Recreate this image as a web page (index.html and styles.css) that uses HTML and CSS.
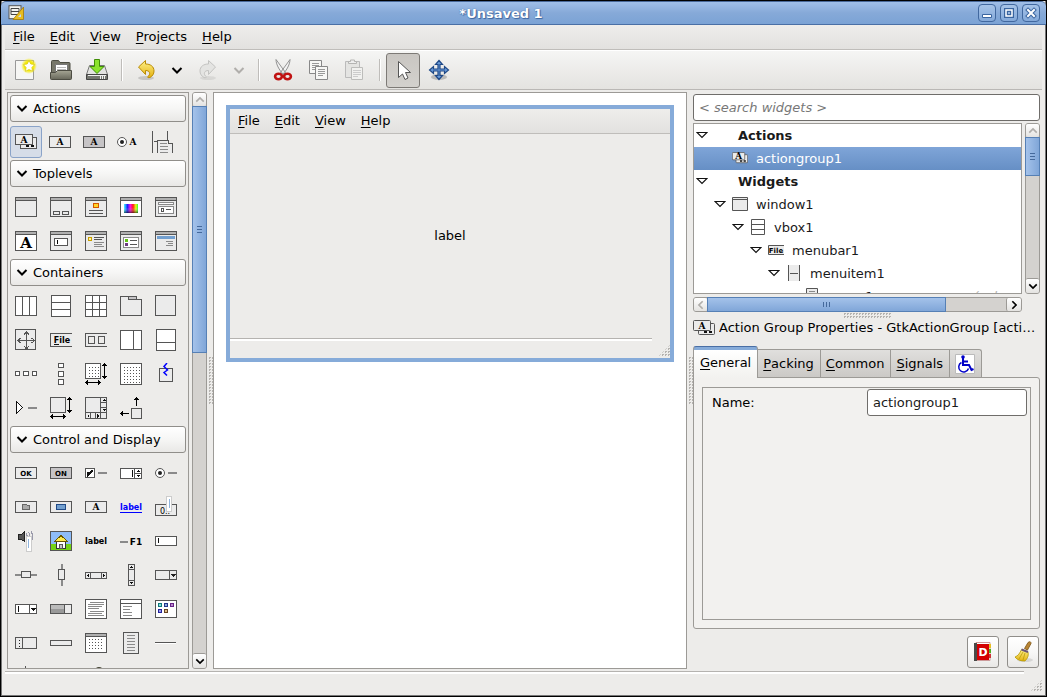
FILE: index.html
```
<!DOCTYPE html>
<html lang="en">

<head>
    <meta charset="UTF-8">
    <meta name="viewport" content="width=device-width, initial-scale=1.0">
    <title>*Unsaved 1</title>
    <link rel="stylesheet" href="styles.css">
</head>

<body>
    <!-- Shared icon parts -->
    <svg class="defs" width="0" height="0" aria-hidden="true">
        <defs>
            <linearGradient id="rainbow">
                <stop offset="0" stop-color="#40ffff" />
                <stop offset=".25" stop-color="#2020ff" />
                <stop offset=".45" stop-color="#ff10e0" />
                <stop offset=".65" stop-color="#ff2010" />
                <stop offset=".85" stop-color="#e8ff10" />
                <stop offset="1" stop-color="#30ff30" />
            </linearGradient>
            <linearGradient id="shade" x2="0" y2="1">
                <stop offset="0" stop-color="#fff" stop-opacity="0" />
                <stop offset=".4" stop-color="#fff" stop-opacity="0" />
                <stop offset="1" stop-color="#000" stop-opacity=".6" />
            </linearGradient>
            <linearGradient id="gold" x2="0" y2="1">
                <stop offset="0" stop-color="#fdf08a" />
                <stop offset="1" stop-color="#e5b210" />
            </linearGradient>
            <linearGradient id="folder" x2="0" y2="1">
                <stop offset="0" stop-color="#a5a594" />
                <stop offset="1" stop-color="#67675a" />
            </linearGradient>
            <radialGradient id="glow">
                <stop offset=".6" stop-color="#f4ea10" />
                <stop offset="1" stop-color="#f8ee20" stop-opacity="0" />
            </radialGradient>
            <pattern id="dots" width="3" height="3" patternUnits="userSpaceOnUse">
                <path fill="#555" d="M1 1h1v1h-1z" />
            </pattern>
        </defs>
        <symbol id="frame" viewBox="0 0 22 22">
            <rect class="ln" x=".5" y="1.5" width="21" height="19" rx="1" />
            <path fill="#b0b0b0" d="M1 2h20v2H1z" />
            <path class="ln" d="M1 4.500h20" />
        </symbol>
        <symbol id="group" viewBox="0 0 22 22">
            <rect class="ln" x="5.500" y="6.500" width="16" height="11" rx="1" />
            <path stroke="#111" stroke-width="2" d="M11 15h3M16 15h3" />
            <rect class="ln" x=".5" y="3.500" width="17" height="10" rx="1" />
        </symbol>
        <symbol id="vbox" viewBox="0 0 22 22">
            <path class="ln w" d="M1.500.5h19v21h-19zM1.500 7.500h19M1.500 14.500h19" />
        </symbol>
        <symbol id="down" viewBox="0 0 12 12">
            <path fill="none" stroke="currentColor" stroke-width="2" d="M1.500 4l4.500 4.500 4.500-4.500" />
        </symbol>
        <symbol id="tri" viewBox="0 0 12 12">
            <path fill="#fff" stroke="#111" stroke-width="1.200" d="M1 3.500h10l-5 5z" />
        </symbol>
    </svg>

    <div class="window">
        <header class="titlebar">
            <svg class="appicon" viewBox="0 0 16 16">
                <rect x="1" y=".7" width="12" height="13" fill="#f4f4f0" stroke="#555" />
                <path fill="none" stroke="#444" d="M3 3.500h8v6H3zM3 6.500h8" />
                <path fill="#e6bc20" stroke="#a77a05" stroke-width=".8" d="M15.500 2v12.500H5z" />
                <path fill="#c7d7f0" d="M13 9v3h-3z" />
            </svg>
            <h1>*Unsaved 1</h1>
            <div class="winbtns">
                <button aria-label="Minimize"><svg viewBox="0 0 16 16"><path fill="#fff" stroke="#3a65a0" d="M3.500 9.500h9v3h-9z" /></svg></button>
                <button aria-label="Maximize"><svg viewBox="0 0 16 16"><path fill="none" stroke="#3a65a0" stroke-width="4" d="M5 5h6v6H5z" /><path fill="none" stroke="#fff" stroke-width="1.500" d="M5 5h6v6H5z" /></svg></button>
                <button aria-label="Close"><svg viewBox="0 0 16 16"><path stroke="#3a65a0" stroke-width="4" stroke-linecap="square" d="M5 5l6 6M11 5l-6 6" /><path stroke="#fff" stroke-width="2" stroke-linecap="square" d="M5 5l6 6M11 5l-6 6" /></svg></button>
            </div>
        </header>

        <nav class="menubar">
            <button><u>F</u>ile</button>
            <button><u>E</u>dit</button>
            <button><u>V</u>iew</button>
            <button><u>P</u>rojects</button>
            <button><u>H</u>elp</button>
        </nav>

        <div class="toolbar">
            <button aria-label="New">
                <svg viewBox="0 0 24 24">
                    <path fill="#f6f6f4" stroke="#999" d="M2.500 2.500h18v19h-18z" />
                    <circle cx="16" cy="8" r="8" fill="url(#glow)" />
                    <path fill="#fff" stroke="#d8c800" stroke-width=".7" d="M16 2.500l1.800 3.500 3.900.6-2.800 2.800.6 3.900-3.500-1.800-3.500 1.800.6-3.900-2.800-2.800 3.900-.6z" />
                </svg>
            </button>
            <button aria-label="Open">
                <svg viewBox="0 0 24 24">
                    <path fill="#77776a" stroke="#4c4c42" d="M2.500 20V3.500q0-1 1-1h6l1.500 2h9q1 0 1 1V20z" />
                    <path fill="#fff" stroke="#777" d="M6.500 6.500h12v9h-12z" />
                    <path stroke="#bbb" d="M8 9.500h9M8 11.500h9" />
                    <path fill="url(#folder)" stroke="#4c4c42" d="M1.500 14.500h5l2-2h14v8q0 1-1 1h-19q-1 0-1-1z" />
                </svg>
            </button>
            <button aria-label="Save">
                <svg viewBox="0 0 24 24">
                    <path fill="#e3e3e1" stroke="#777" d="M4.500 7.500h15l3 9H1.500z" />
                    <path fill="#74766f" stroke="#444" d="M1.500 16.500h21v5h-21z" />
                    <path stroke="#eee" d="M3 17.500h18M15.500 18v3M17.500 18v3M19.500 18v3" />
                    <path fill="#8be32c" stroke="#3f8c05" d="M9.500 1.500h5v7h4.500l-7 7-7-7h4.500z" />
                </svg>
            </button>
            <span class="sep"></span>
            <button aria-label="Undo">
                <svg viewBox="0 0 24 24">
                    <ellipse cx="12" cy="20" rx="8" ry="2" fill="#000" opacity=".15" />
                    <path fill="url(#gold)" stroke="#b98b05" d="M11.500 2.500v3.500c5 0 8.500 2.500 8.500 7 0 3-1.500 5-4 6.500-2.500.5-3-.5-1.500-1.500 2-2 1.500-5.500-3-5.500v4l-7-7.500z" />
                </svg>
            </button>
            <button class="narrow" aria-label="Undo history"><svg viewBox="0 0 12 12"><use href="#down" /></svg></button>
            <button aria-label="Redo" disabled>
                <svg viewBox="0 0 24 24">
                    <ellipse cx="12" cy="20" rx="8" ry="2" fill="#000" opacity=".07" />
                    <path fill="#e4e4e2" stroke="#c3c3c1" d="M12.500 2.500v3.500c-5 0-8.500 2.500-8.500 7 0 3 1.500 5 4 6.500 2.500.5 3-.5 1.500-1.500-2-2-1.500-5.500 3-5.500v4l7-7.500z" />
                </svg>
            </button>
            <button class="narrow" aria-label="Redo history" disabled><svg viewBox="0 0 12 12"><use href="#down" /></svg></button>
            <span class="sep"></span>
            <button aria-label="Cut">
                <svg viewBox="0 0 24 24">
                    <path fill="#f2f2f2" stroke="#888" stroke-width=".9" d="M5 1.500l9.500 13-2 2C8 12 5 6 5 1.500zM19 1.500l-9.500 13 2 2C16 12 19 6 19 1.500z" />
                    <g fill="none" stroke="#c01212" stroke-width="2.600">
                        <ellipse cx="7.500" cy="18.500" rx="3.400" ry="2.700" />
                        <ellipse cx="16.500" cy="18.500" rx="3.400" ry="2.700" />
                    </g>
                </svg>
            </button>
            <button aria-label="Copy">
                <svg viewBox="0 0 24 24">
                    <path fill="#f7f7f5" stroke="#888" d="M2.500 2.500h12v13h-12z" />
                    <path stroke="#999" d="M5 5.500h7M5 7.500h7M5 9.500h7M5 11.500h5" />
                    <path fill="#f7f7f5" stroke="#888" d="M8.500 8.500h12v13h-12z" />
                    <path stroke="#999" d="M11 11.500h7M11 13.500h7M11 15.500h7M11 17.500h5" />
                </svg>
            </button>
            <button aria-label="Paste" disabled>
                <svg viewBox="0 0 24 24">
                    <path fill="#e4e4e2" stroke="#bbb" d="M2.500 3.500h14v16h-14z" />
                    <path fill="#eee" stroke="#b4b4b2" d="M5.500 5.500v-2h2v-1.500h4v1.500h2v2z" />
                    <path fill="#f1f1ef" stroke="#bcbcba" d="M8.500 9.500h11v12h-11z" />
                    <path stroke="#ccc" d="M10 12.500h8M10 14.500h8M10 16.500h8M10 18.500h5" />
                </svg>
            </button>
            <span class="sep"></span>
            <button class="pressed" aria-label="Selector" aria-pressed="true">
                <svg viewBox="0 0 24 24">
                    <path fill="#fff" stroke="#555" d="M7.500 3.500v16l4-3.500 2.500 5.500 3-1.500-2.500-5.500h5z" />
                </svg>
            </button>
            <button aria-label="Drag and resize">
                <svg viewBox="0 0 24 24">
                    <ellipse cx="12" cy="19" rx="8" ry="3" fill="#000" opacity=".2" />
                    <path fill="#6a9bd8" stroke="#1f4987" stroke-width="1.200" d="M12 2.500l3.500 4H13v4.500h4.500V8.500L21.500 12l-4 3.500V13H13v4.500h2.500L12 21.500l-3.500-4H11V13H6.500v2.500L2.500 12l4-3.500V11H11V6.500H8.500z" />
                </svg>
            </button>
        </div>

        <main class="main">
            <aside class="left">
                <div class="palette">
                    <section>
                        <button class="group" aria-expanded="true"><svg viewBox="0 0 12 12"><use href="#down" /></svg>Actions</button>
                        <div class="items tight">
                            <button class="selected" aria-label="Action Group"><svg viewBox="0 0 22 22"><use href="#group" /><text class="ta" x="9" y="12">A</text></svg></button>
                            <button aria-label="Action"><svg viewBox="0 0 22 22"><rect class="ln" x=".5" y="5.500" width="21" height="11" rx="1" /><text class="ta" x="11" y="14">A</text></svg></button>
                            <button aria-label="Toggle Action"><svg viewBox="0 0 22 22"><rect class="ln d" x=".5" y="5.500" width="21" height="11" rx="1" /><text class="ta" x="11" y="14">A</text></svg></button>
                            <button aria-label="Radio Action"><svg viewBox="0 0 22 22"><circle class="ln w" cx="5" cy="11" r="4.500" /><circle cx="5" cy="11" r="2" fill="#222" /><text class="ta" x="16" y="14">A</text></svg></button>
                            <button aria-label="Recent Action"><svg viewBox="0 0 22 22"><path class="k" d="M1.500 0v22M16.500 0v9M3 10.500h4" /><path class="ln" d="M6.500 22V9.500h11v3h4V22" /><path class="g" d="M9 12.500h7M9 15.500h8M9 18.500h8M9 21.500h8" /></svg></button>
                        </div>
                    </section>
                    <section>
                        <button class="group" aria-expanded="true"><svg viewBox="0 0 12 12"><use href="#down" /></svg>Toplevels</button>
                        <div class="items">
                            <button aria-label="Window"><svg viewBox="0 0 22 22"><use href="#frame" /></svg></button>
                            <button aria-label="Dialog"><svg viewBox="0 0 22 22"><use href="#frame" /><rect class="ln" x="3.500" y="15.500" width="6" height="3" rx="1" /><rect class="ln" x="12.500" y="15.500" width="6" height="3" rx="1" /></svg></button>
                            <button aria-label="About Dialog"><svg viewBox="0 0 22 22"><use href="#frame" /><rect x="8.500" y="7.500" width="5" height="4" rx="1" fill="#ffd42a" stroke="#d45500" /><path class="k" d="M4 14.500h14M4 17.500h14" /></svg></button>
                            <button aria-label="Color Selection Dialog"><svg viewBox="0 0 22 22"><use href="#frame" /><path fill="#fff" d="M1 5h20v15H1z" /><path fill="url(#rainbow)" d="M4 8h14v9H4z" /><path fill="url(#shade)" d="M4 8h14v9H4z" /></svg></button>
                            <button aria-label="File Chooser Dialog"><svg viewBox="0 0 22 22"><use href="#frame" /><rect class="ln w g" x="3.500" y="6.500" width="15" height="2" /><rect class="ln w g" x="3.500" y="10.500" width="15" height="7" /><path class="k" d="M6.500 12.500h2v3h-2zM11 13.500h5" /></svg></button>
                            <button aria-label="Font Selection Dialog"><svg viewBox="0 0 22 22"><use href="#frame" /><path fill="#fff" d="M1 5h20v15H1z" /><text class="serif" x="11" y="18">A</text></svg></button>
                            <button aria-label="Input Dialog"><svg viewBox="0 0 22 22"><use href="#frame" /><rect class="ln w" x="4.500" y="8.500" width="13" height="7" rx="1" /><path stroke="#000" d="M7.500 10v4" /></svg></button>
                            <button aria-label="Message Dialog"><svg viewBox="0 0 22 22"><use href="#frame" /><path fill="#fff0a0" stroke="#c8a000" d="M3.500 7.500h3v3h-3z" /><path class="k" d="M9 7.500h10M9 9.500h8" /><path class="g" d="M9 12.500h10M9 14.500h8M9 16.500h10" /></svg></button>
                            <button aria-label="Recent Chooser Dialog"><svg viewBox="0 0 22 22"><use href="#frame" /><rect class="ln w g" x="3.500" y="7.500" width="15" height="10" /><path fill="#63c313" d="M5 9h3v3H5z" /><path fill="#6c3a80" d="M5 13h3v3H5z" /><path class="k" d="M10 10.500h7M10 14.500h7" /></svg></button>
                            <button aria-label="Assistant"><svg viewBox="0 0 22 22"><use href="#frame" /><path fill="#729fcf" d="M2 6h18v3H2z" /><path class="g" d="M11 11.500h7M13 13.500h5M11 15.500h7" /></svg></button>
                        </div>
                    </section>
                    <section>
                        <button class="group" aria-expanded="true"><svg viewBox="0 0 12 12"><use href="#down" /></svg>Containers</button>
                        <div class="items">
                            <button aria-label="Horizontal Box"><svg viewBox="0 0 22 22"><path class="ln w" d="M.5 1.500h21v19H.5zM7.500 2v18M14.500 2v18" /></svg></button>
                            <button aria-label="Vertical Box"><svg viewBox="0 0 22 22"><use href="#vbox" /></svg></button>
                            <button aria-label="Table"><svg viewBox="0 0 22 22"><path class="ln w" d="M.5.5h21v21H.5zM7.500 1v20M14.500 1v20M1 7.500h20M1 14.500h20" /></svg></button>
                            <button aria-label="Notebook"><svg viewBox="0 0 22 22"><path class="ln" d="M.5 1.500h8v3h8v-3 3h5v16H.5z" /><path class="ln d" d="M8.500 1.500h8v3h-8z" /></svg></button>
                            <button aria-label="Frame"><svg viewBox="0 0 22 22"><rect class="ln" x=".5" y=".5" width="20" height="20" rx="1" /></svg></button>
                            <button aria-label="Aspect Frame"><svg viewBox="0 0 22 22"><rect class="ln" x=".5" y=".5" width="20" height="20" rx="1" /><path class="k" d="M3 11.500h16M11.500 3v17M5.500 9L3 11.500 5.500 14M16.500 9l3 2.500-3 2.500M9 5.500L11.500 3 14 5.500M9 17l2.500 3 2.500-3" /></svg></button>
                            <button aria-label="Menu Bar"><svg viewBox="0 0 22 22"><path class="ln" d="M22 4.500H.5v13H22" /><text class="t9" x="12" y="14">File</text><path stroke="#111" d="M4 15.500h5" /></svg></button>
                            <button aria-label="Toolbar"><svg viewBox="0 0 22 22"><path class="ln" d="M22 4.500H.5v13H22M3.500 7.500h6v7h-6zM13.500 7.500h6v7h-6z" /></svg></button>
                            <button aria-label="Horizontal Panes"><svg viewBox="0 0 22 22"><path class="ln w" d="M.5 1.500h21v19H.5zM13.500 2v18" /></svg></button>
                            <button aria-label="Vertical Panes"><svg viewBox="0 0 22 22"><path class="ln w" d="M1.500.5h19v21h-19zM2 13.500h18" /></svg></button>
                            <button aria-label="Horizontal Button Box"><svg viewBox="0 0 22 22"><path class="ln w" d="M.5 8.500h4v4h-4zM8.500 8.500h5v4h-5zM17.500 8.500h4v4h-4z" /></svg></button>
                            <button aria-label="Vertical Button Box"><svg viewBox="0 0 22 22"><path class="ln w" d="M8.500.5h5v4h-5zM8.500 8.500h5v5h-5zM8.500 16.500h5v5h-5z" /></svg></button>
                            <button aria-label="Layout"><svg viewBox="0 0 22 22"><path class="ln w" d="M.5.5h15v15H.5z" /><path fill="url(#dots)" d="M2 2h12v12H2z" /><path class="a" d="M19.500 1v14M17.500 3l2-2 2 2M17.500 13l2 2 2-2M1 19.500h14M3 17.500l-2 2 2 2M13 17.500l2 2-2 2" /></svg></button>
                            <button aria-label="Fixed"><svg viewBox="0 0 22 22"><path class="ln w" d="M.5.5h21v21H.5z" /><path fill="url(#dots)" d="M2 2h18v18H2z" /></svg></button>
                            <button aria-label="Handle Box"><svg viewBox="0 0 22 22"><rect class="ln" x="4.500" y="5.500" width="13" height="13" rx="1" /><path class="zig" d="M12 0L9 3.500l3.500 3.500L9 9.500l3 3" /></svg></button>
                            <button aria-label="Expander"><svg viewBox="0 0 22 22"><path fill="#fff" stroke="#111" d="M1.500 4.500v12l6-6z" /><path class="g" stroke-width="2" d="M13 11h9" /></svg></button>
                            <button aria-label="Viewport"><svg viewBox="0 0 22 22"><path class="ln" d="M.5.5h15v15H.5z" /><path class="a" d="M19.500 1v14M17.500 3l2-2 2 2M17.500 13l2 2 2-2M1 19.500h14M3 17.500l-2 2 2 2M13 17.500l2 2-2 2" /></svg></button>
                            <button aria-label="Scrolled Window"><svg viewBox="0 0 22 22"><path class="ln" d="M.5.5h21v21H.5zM15.500 1v20M1 15.500h20M16 5.500h5M16 10.500h5M5.500 16v5M10.500 16v5" /><path fill="#111" d="M17 4h4l-2-2zM17 12h4l-2 2zM4 17v4l-2-2zM12 17v4l2-2z" /></svg></button>
                            <button aria-label="Alignment"><svg viewBox="0 0 22 22"><path class="ln" d="M11.500 11.500h10v10h-10z" /><path class="a" d="M16.500 1v8M14.500 3l2-2 2 2M1 16.500h8M3 14.500l-2 2 2 2" /></svg></button>
                        </div>
                    </section>
                    <section>
                        <button class="group" aria-expanded="true"><svg viewBox="0 0 12 12"><use href="#down" /></svg>Control and Display</button>
                        <div class="items">
                            <button aria-label="Button"><svg viewBox="0 0 22 22"><rect class="ln" x=".5" y="5.500" width="21" height="11" rx="1" /><text class="t7" x="11" y="14">OK</text></svg></button>
                            <button aria-label="Toggle Button"><svg viewBox="0 0 22 22"><rect class="ln d" x=".5" y="5.500" width="21" height="11" rx="1" /><text class="t7" x="11" y="14">ON</text></svg></button>
                            <button aria-label="Check Button"><svg viewBox="0 0 22 22"><path class="ln w" d="M.5 6.500h9v9h-9z" /><path fill="none" stroke="#111" stroke-width="2" d="M2.500 10v3.500l5-5" /><path class="g" stroke-width="2" d="M13 11h9" /></svg></button>
                            <button aria-label="Spin Button"><svg viewBox="0 0 22 22"><path class="ln w" d="M.5 6.500h21v10H.5zM14.500 7v9M15 11.500h6" /><path fill="#111" d="M12 8h1v7h-1zM16 10h4l-2-2zM16 13h4l-2 2z" /></svg></button>
                            <button aria-label="Radio Button"><svg viewBox="0 0 22 22"><circle class="ln w" cx="5" cy="11" r="4.500" /><circle cx="5" cy="11" r="2" fill="#222" /><path class="g" stroke-width="2" d="M13 11h9" /></svg></button>

                            <button aria-label="File Chooser Button"><svg viewBox="0 0 22 22"><rect class="ln" x=".5" y="5.500" width="21" height="11" rx="1" /><path fill="#aaa" stroke="#666" d="M7.500 13.500v-5h4l1 1h2v4z" /></svg></button>
                            <button aria-label="Color Button"><svg viewBox="0 0 22 22"><rect class="ln" x=".5" y="5.500" width="21" height="11" rx="1" /><path fill="#729fcf" stroke="#204a87" d="M6.500 8.500h9v5h-9z" /></svg></button>
                            <button aria-label="Font Button"><svg viewBox="0 0 22 22"><rect class="ln" x=".5" y="5.500" width="21" height="11" rx="1" /><text class="ta" x="11" y="14">A</text></svg></button>
                            <button aria-label="Link Button"><svg viewBox="0 0 22 22"><text class="t9 link" x="11" y="14">label</text><path stroke="#00f" d="M0 16.500h22" /></svg></button>
                            <button aria-label="Scale Button"><svg viewBox="0 0 22 22"><rect class="ln" x=".5" y="8.500" width="21" height="11" rx="1" /><text class="t9 thin" x="10" y="18">0..</text><path fill="#fff" stroke="#ccc" d="M11.500.5h5v15h-5z" /><path fill="#8fb4dd" d="M14 3h1v9h-1z" /></svg></button>

                            <button aria-label="Volume Button"><svg viewBox="0 0 22 22"><path fill="#555" stroke="#222" d="M3.500 4.500h3l3-3v10l-3-2h-3z" /><path fill="none" stroke="#99a" stroke-width="1.200" d="M11 3q2 3 0 6M13.500 2q3 4 0 9M16 1q3 5 0 11" /><path fill="#fff" stroke="#ccc" d="M11.500 6.500h5v15h-5z" /><path fill="#8fb4dd" d="M13 9h1v9h-1z" /></svg></button>
                            <button aria-label="Image"><svg viewBox="0 0 22 22"><path fill="#8ebcf8" stroke="#555" d="M.5 1.500h21v19H.5z" /><path fill="#73d216" d="M1 14h20v6H1z" /><path fill="#fff" stroke="#333" d="M6.500 11h9v7h-9z" /><path fill="#fce94f" stroke="#665500" d="M4.500 11.500l6.500-6 6.500 6z" /><path class="ln d" d="M9.500 14.500h3v4h-3z" /></svg></button>
                            <button aria-label="Label"><svg viewBox="0 0 22 22"><text class="t9" x="11" y="14">label</text></svg></button>
                            <button aria-label="Accelerator Label"><svg viewBox="0 0 22 22"><path class="g" stroke-width="2" d="M0 12h8" /><text class="f1" x="16" y="15">F1</text></svg></button>
                            <button aria-label="Text Entry"><svg viewBox="0 0 22 22"><rect class="ln w" x=".5" y="6.500" width="21" height="9" rx="1" /><path stroke="#111" d="M3.500 8v5" /></svg></button>

                            <button aria-label="Horizontal Scale"><svg viewBox="0 0 22 22"><path class="g" stroke-width="2" d="M0 11h22" /><rect class="ln" x="6.500" y="7.500" width="9" height="6" rx="1" /></svg></button>
                            <button aria-label="Vertical Scale"><svg viewBox="0 0 22 22"><path class="g" stroke-width="2" d="M12 0v22" /><rect class="ln" x="8.500" y="5.500" width="6" height="10" rx="1" /></svg></button>
                            <button aria-label="Horizontal Scrollbar"><svg viewBox="0 0 22 22"><path class="ln" d="M.5 8.500h21v6H.5zM5.500 9v5M16.500 9v5" /><path fill="#111" d="M4 9.500v4l-2-2zM18 9.500v4l2-2z" /></svg></button>
                            <button aria-label="Vertical Scrollbar"><svg viewBox="0 0 22 22"><path class="ln" d="M8.500.5h6v21h-6zM9 5.500h5M9 16.500h5" /><path fill="#111" d="M9.500 4h4l-2-2zM9.500 18h4l-2 2z" /></svg></button>
                            <button aria-label="Combo Box"><svg viewBox="0 0 22 22"><path class="ln" d="M.5 6.500h21v9H.5zM14.500 7v8" /><path fill="#222" d="M16 10h5l-2.500 3z" /></svg></button>

                            <button aria-label="Combo Box Entry"><svg viewBox="0 0 22 22"><path class="ln w" d="M.5 6.500h21v9H.5zM14.500 7v8" /><path fill="#111" d="M3 8h1v6H3zM16 10h5l-2.500 3z" /></svg></button>
                            <button aria-label="Progress Bar"><svg viewBox="0 0 22 22"><path class="ln" d="M.5 6.500h21v9H.5z" /><path fill="#bbb" d="M1 7h13v4H1z" /><path fill="#999" d="M1 11h13v4H1z" /><path class="ln" d="M14.500 7v8" /></svg></button>
                            <button aria-label="Text View"><svg viewBox="0 0 22 22"><rect class="ln w" x=".5" y="1.500" width="21" height="19" rx="1" /><path class="g" d="M5 4.500h14M3 6.500h16M3 8.500h14M3 10.500h11M5 13.500h14M3 15.500h14M3 17.500h16" /></svg></button>
                            <button aria-label="Tree View"><svg viewBox="0 0 22 22"><rect class="ln w" x=".5" y="1.500" width="21" height="19" rx="1" /><path class="ln" d="M1 5.500h20" /><path class="g" d="M3 8.500h9M3 11.500h7M3 14.500h9M3 17.500h9" /></svg></button>
                            <button aria-label="Icon View"><svg viewBox="0 0 22 22"><rect class="ln w" x=".5" y="2.500" width="21" height="17" rx="1" /><path fill="#8dd" stroke="#177" d="M3.500 5.500h3v3h-3z" /><path fill="#8ad" stroke="#238" d="M9.500 5.500h3v3h-3z" /><path fill="#b8c" stroke="#628" d="M15.500 5.500h3v3h-3z" /><path fill="#99e" stroke="#229" d="M3.500 11.500h3v3h-3z" /><path fill="#db8" stroke="#642" d="M9.500 11.500h3v3h-3z" /></svg></button>

                            <button aria-label="Tool Palette"><svg viewBox="0 0 22 22"><path class="ln" d="M.5 5.500h21v11H.5zM7.500 6v10" /><path fill="#222" d="M4 8h1v1H4zM4 11h1v1H4zM4 14h1v1H4z" /></svg></button>
                            <button aria-label="Status Bar"><svg viewBox="0 0 22 22"><rect class="ln" x=".5" y="8.500" width="21" height="5" rx="1" /></svg></button>
                            <button aria-label="Calendar"><svg viewBox="0 0 22 22"><use href="#frame" /><path fill="#fff" d="M1 5h20v15H1z" /><path fill="url(#dots)" d="M3 6h16v12H3z" /></svg></button>
                            <button aria-label="Popup Menu"><svg viewBox="0 0 22 22"><path class="ln" d="M3.500.5h15v21h-15z" /><path class="g" d="M7 3.500h8M7 6.500h8M7 9.500h8M7 12.500h8M7 15.500h8M7 18.500h8" /></svg></button>
                            <button aria-label="Horizontal Separator"><svg viewBox="0 0 22 22"><path class="k" d="M0 10.500h21" /><path stroke="#fff" d="M0 11.500h21" /></svg></button>

                            <button aria-label="Vertical Separator"><svg viewBox="0 0 22 22"><path class="k" d="M10.500 0v22" /></svg></button>
                            <span></span>
                            <button aria-label="Drawing Area"><svg viewBox="0 0 22 22"><circle cx="14" cy="6" r="5" fill="#443" /></svg></button>
                        </div>
                    </section>
                </div>
                <div class="scroll vert">
                    <button aria-label="Scroll up" disabled><svg class="up" viewBox="0 0 12 12"><use href="#down" /></svg></button>
                    <div class="thumb long"></div>
                    <button class="end" aria-label="Scroll down"><svg viewBox="0 0 12 12"><use href="#down" /></svg></button>
                </div>
            </aside>

            <div class="grip"><i></i></div>

            <div class="canvas">
                <div class="preview">
                    <nav class="menubar">
                        <button><u>F</u>ile</button>
                        <button><u>E</u>dit</button>
                        <button><u>V</u>iew</button>
                        <button><u>H</u>elp</button>
                    </nav>
                    <div class="content">label</div>
                    <div class="statusbar"><i class="corner"></i></div>
                </div>
            </div>

            <div class="grip"><i></i></div>

            <aside class="right">
                <input class="entry search" type="text" placeholder="&lt; search widgets &gt;" aria-label="Search widgets">
                <div class="inspector">
                    <ul class="tree">
                        <li><svg class="exp" viewBox="0 0 12 12"><use href="#tri" /></svg><span class="slot"></span><b>Actions</b></li>
                        <li class="l1 current"><span class="exp"></span><svg class="slot" viewBox="0 0 22 22"><use href="#group" /><text class="ta big" x="9" y="13">A</text></svg>actiongroup1</li>
                        <li><svg class="exp" viewBox="0 0 12 12"><use href="#tri" /></svg><span class="slot"></span><b>Widgets</b></li>
                        <li class="l1"><svg class="exp" viewBox="0 0 12 12"><use href="#tri" /></svg><svg class="slot" viewBox="0 0 16 16"><path class="ln" d="M.5 1.500h15v13H.5z" /><path class="k" d="M1 3.500h14" /></svg>window1</li>
                        <li class="l2"><svg class="exp" viewBox="0 0 12 12"><use href="#tri" /></svg><svg class="slot" viewBox="0 0 16 16"><path class="ln w" d="M1.500.5h13v15h-13zM2 5.500h12M2 10.500h12" /></svg>vbox1</li>
                        <li class="l3"><svg class="exp" viewBox="0 0 12 12"><use href="#tri" /></svg><svg class="slot" viewBox="0 0 16 16"><path class="ln" d="M16 3.500H.5v9H16" /><text class="t7" x="8" y="11">File</text></svg>menubar1</li>
                        <li class="l4"><svg class="exp" viewBox="0 0 12 12"><use href="#tri" /></svg><svg class="slot" viewBox="0 0 16 16"><path fill="#ebebeb" d="M2 0h12v16H2z" /><path class="k" d="M2.500 0v16M13.500 0v16M4 8.500h8" /></svg>menuitem1</li>
                        <li class="l5"><span class="exp"></span><svg class="slot" viewBox="0 0 16 16"><path class="ln" d="M2.500.5h11v15h-11z" /><path class="g" d="M5 3.500h6M5 6.500h6M5 9.500h6" /></svg>menu1<em>(submenu)</em></li>
                    </ul>
                    <div class="scroll vert">
                        <button aria-label="Scroll up" disabled><svg class="up" viewBox="0 0 12 12"><use href="#down" /></svg></button>
                        <div class="thumb short"></div>
                        <button class="end" aria-label="Scroll down"><svg viewBox="0 0 12 12"><use href="#down" /></svg></button>
                    </div>
                    <div class="scroll horiz">
                        <button aria-label="Scroll left" disabled><svg class="lt" viewBox="0 0 12 12"><use href="#down" /></svg></button>
                        <div class="thumb"></div>
                        <button class="end" aria-label="Scroll right"><svg class="rt" viewBox="0 0 12 12"><use href="#down" /></svg></button>
                    </div>
                </div>
                <div class="grip flat"><i></i></div>

                <div class="heading">
                    <svg viewBox="0 0 22 22"><use href="#group" /><text class="ta" x="9" y="12">A</text></svg>
                    <h2>Action Group Properties - GtkActionGroup [actiongroup1]</h2>
                </div>

                <div class="tabs" role="tablist">
                    <button role="tab" class="active" aria-selected="true"><u>G</u>eneral</button>
                    <button role="tab"><u>P</u>acking</button>
                    <button role="tab"><u>C</u>ommon</button>
                    <button role="tab"><u>S</u>ignals</button>
                    <button role="tab" aria-label="Accessibility">
                        <svg viewBox="0 0 20 20">
                            <path fill="#fff" stroke="#bbb" d="M.5.5h19v19H.5z" />
                            <circle cx="8" cy="3" r="1.800" fill="#0000c8" />
                            <path fill="none" stroke="#0000c8" stroke-width="2" d="M8 4v7h6l2.500 5 2-1M8 7.500h5" />
                            <path fill="none" stroke="#0000c8" stroke-width="1.500" d="M6.500 8.500a5 5 0 1 0 7 6" />
                        </svg>
                    </button>
                </div>
                <div class="page" role="tabpanel">
                    <form class="props">
                        <label for="name">Name:</label>
                        <input class="entry" id="name" type="text" value="actiongroup1">
                    </form>
                </div>

                <div class="actions">
                    <button aria-label="Documentation">
                        <svg viewBox="0 0 24 24">
                            <path fill="#fff" stroke="#c99" d="M5 2.500h14v18H5z" />
                            <path fill="#4a4a48" d="M3 3h3v18H3z" />
                            <path fill="#d40000" d="M6 4h12v16H6z" />
                            <path fill="#e8c020" d="M18 4h2v4h-2z" />
                            <path fill="#4caf20" d="M18 9h2v4h-2z" />
                            <path fill="#c33" d="M18 14h2v4h-2z" />
                            <text class="book" x="12" y="16">D</text>
                        </svg>
                    </button>
                    <button aria-label="Clear">
                        <svg viewBox="0 0 24 24">
                            <ellipse cx="14" cy="20" rx="8" ry="2" fill="#000" opacity=".1" />
                            <path fill="#b98535" stroke="#7a5210" stroke-width=".8" d="M17 2.500q3-2 3 1l-3.500 6.500-3-1.500z" />
                            <path fill="url(#gold)" stroke="#b39800" stroke-width=".8" d="M10.500 9.500l6.500 2.500c1 4-1 7-3 9-4 0-8-1-10-4 3-1 5-4 6.500-7.500z" />
                            <path stroke="#6b5678" stroke-width="2" d="M10.500 9.500l6.500 2.500" />
                            <path stroke="#b39800" stroke-width=".7" d="M12 12l-4 7M14 13l-2 7" />
                        </svg>
                    </button>
                </div>
            </aside>
        </main>

        <footer class="statusbar"><i class="corner"></i></footer>
    </div>
</body>

</html>
```
FILE: styles.css
```
* {
    margin: 0;
    padding: 0;
    box-sizing: border-box;
}

body {
    background-color: #000;
    color: #000;
    font: 13px "DejaVu Sans", sans-serif;
}

button {
    border: none;
    background: none;
    color: inherit;
    font: inherit;
}

svg {
    display: block;
    flex: none;
}

u {
    text-underline-offset: 2px;
    text-decoration-thickness: 1px;
}

.defs {
    position: absolute;
}

.window {
    display: flex;
    flex-direction: column;
    height: 100vh;
    border: 1px solid #000;
    background-color: #edecea;
    box-shadow: inset 1px 0 #777, inset -1px -1px #777;
}

/* Title bar */
.titlebar {
    display: flex;
    align-items: center;
    height: 24px;
    padding: 0 6px 0 7px;
    border-top: 1px solid #49699a;
    border-bottom: 1px solid #4a6fa5;
    border-radius: 5px 5px 0 0;
    background: linear-gradient(#a0bfe8, #86a9d8 50%, #7ba3d5);
}

.titlebar h1 {
    flex: 1;
    color: #fff;
    font-size: 13px;
    text-align: center;
    text-shadow: 0 0 1px #2c5590, 1px 1px 1px #3c66a0;
}

.appicon {
    width: 16px;
    height: 16px;
}

.winbtns {
    display: flex;
    gap: 4px;
}

.winbtns button {
    width: 18px;
    height: 18px;
    border: 1px solid #41689f;
    border-radius: 4px;
    background: linear-gradient(#a6c3e8, #84a9d9);
}

.winbtns svg {
    width: 16px;
    height: 16px;
}

/* Menus */
.menubar {
    display: flex;
    flex: none;
    align-items: center;
    gap: 15px;
    height: 25px;
    margin: 0 4px;
    padding: 0 0 1px 8px;
    border-bottom: 1px solid #bfbdba;
    background: linear-gradient(#eeedeb, #e2e1df);
}

/* Toolbar */
.toolbar {
    display: flex;
    flex: none;
    align-items: center;
    height: 40px;
    margin: 0 4px;
    padding-left: 2px;
    border-top: 1px solid #fff;
    border-bottom: 1px solid #bab8b5;
    background: linear-gradient(#f5f5f4, #e4e3e0);
}

.toolbar button {
    display: flex;
    align-items: center;
    justify-content: center;
    width: 36px;
    height: 35px;
}

.toolbar svg {
    width: 24px;
    height: 24px;
}

.toolbar .narrow {
    width: 26px;
}

.toolbar .narrow svg {
    width: 12px;
    height: 12px;
}

.toolbar .narrow:disabled {
    color: #b0aeab;
}

.toolbar .pressed {
    width: 34px;
    margin-right: 1px;
    border: 1px solid #7d7a76;
    border-radius: 3px;
    background: linear-gradient(#c9c6c2, #d3d1cd);
}

.sep {
    width: 1px;
    height: 22px;
    margin: 0 6px;
    background-color: #bfbdba;
    box-shadow: 1px 0 #fff;
}

/* Main area */
.main {
    display: flex;
    flex: 1;
    min-height: 0;
    padding: 2px 6px 2px;
}

.left {
    display: flex;
    gap: 3px;
    width: 200px;
    flex: none;
}

.palette {
    flex: 1;
    padding: 2px;
    border: 1px solid #9c9a96;
    overflow: hidden;
}

.group {
    display: flex;
    align-items: center;
    gap: 5px;
    width: 100%;
    height: 27px;
    padding: 0 0 1px 5px;
    border: 1px solid #908e8a;
    border-radius: 3px;
    background: linear-gradient(#fff, #f6f6f5 50%, #e9e8e6);
}

.group svg {
    width: 12px;
    height: 12px;
}

.items {
    display: grid;
    grid-template-columns: repeat(5, 32px);
    grid-auto-rows: 32px;
    gap: 2px 3px;
    padding: 4px 0 2px;
}

.items.tight {
    column-gap: 2px;
}

.items button {
    display: flex;
    align-items: center;
    justify-content: center;
    border: 1px solid transparent;
    border-radius: 3px;
}

.items svg {
    width: 22px;
    height: 22px;
    shape-rendering: crispEdges;
}

.items circle {
    shape-rendering: auto;
}

.items .selected {
    border-color: #8aa3c8;
    background-color: #d6dde8;
}

/* Icon strokes and lettering */
.ln {
    fill: #ebebeb;
    stroke: #555;
}

.ln.w {
    fill: #fff;
}

.ln.d {
    fill: #c6c4c6;
}

.g {
    fill: none;
    stroke: #8a8a8a;
}

.k {
    fill: none;
    stroke: #555;
}

.a {
    fill: none;
    stroke: #000;
}

.zig {
    fill: none;
    stroke: #00f;
    stroke-width: 1.5;
    shape-rendering: auto;
}

.t9,
.t7,
.ta,
.f1,
.serif,
.book {
    font: bold 8px "DejaVu Sans", sans-serif;
    text-anchor: middle;
}

.t7 {
    font-size: 7px;
}

.ta {
    font: bold 9px "DejaVu Serif", serif;
}

.ta.big {
    font-size: 12px;
}

.f1 {
    font-size: 9px;
}

.serif {
    font: bold 15px "DejaVu Serif", serif;
}

.book {
    fill: #fff;
    font-size: 11px;
}

.link {
    fill: #00f;
}

.thin {
    font-weight: normal;
}

/* Scrollbars */
.scroll {
    display: flex;
    flex: none;
    border: 1px solid #9c9a96;
    border-radius: 3px;
    background-color: #d4d2cf;
}

.scroll.vert {
    flex-direction: column;
    width: 15px;
}

.scroll button {
    display: flex;
    flex: none;
    align-items: center;
    justify-content: center;
    width: 13px;
    height: 13px;
    background: linear-gradient(#fff, #e4e3e1);
    border-radius: 2px;
}

.scroll button:disabled {
    color: #b0aeab;
}

.scroll svg {
    width: 10px;
    height: 10px;
}

.scroll .end {
    height: 15px;
    border-top: 1px solid #9c9a96;
    margin-top: auto;
}

.up {
    transform: rotate(180deg);
}

.lt {
    transform: rotate(90deg);
}

.rt {
    transform: rotate(-90deg);
}

.thumb {
    display: flex;
    align-items: center;
    justify-content: center;
    margin: 0 -1px;
    border: 1px solid #5680b5;
    background: linear-gradient(90deg, #a4c2ea, #80a6d8);
}

.thumb::after {
    content: "";
    width: 5px;
    height: 7px;
    background: repeating-linear-gradient(#45699b 0 1px, transparent 1px 3px);
}

.thumb.long {
    height: 43%;
}

.thumb.short {
    height: 39px;
}

.scroll.horiz {
    height: 15px;
}

.horiz .thumb {
    width: 73%;
    margin: -1px 0;
    background: linear-gradient(#a4c2ea, #80a6d8);
}

.horiz .thumb::after {
    width: 7px;
    height: 5px;
    background: repeating-linear-gradient(90deg, #45699b 0 1px, transparent 1px 3px);
}

.horiz .end {
    width: 15px;
    height: 13px;
    margin-top: 0;
    margin-left: auto;
    border-top: none;
    border-left: 1px solid #9c9a96;
}

/* Pane handles */
.grip {
    display: flex;
    flex: none;
    align-items: center;
    justify-content: center;
    width: 6px;
}

.grip i,
.corner {
    background: conic-gradient(#b4b2af 25%, transparent 0) 0 0 / 3px 3px;
}

.grip i {
    width: 5px;
    height: 48px;
}

.grip.flat {
    width: auto;
    height: 6px;
}

.grip.flat i {
    width: 48px;
    height: 5px;
}

/* Design area */
.canvas {
    flex: 1;
    min-width: 0;
    padding: 12px;
    border: 1px solid #9c9a96;
    background-color: #fff;
    overflow: hidden;
}

.preview {
    border: 4px solid #86abd9;
    background-color: #edecea;
}

.preview .menubar {
    margin: 0;
}

.preview .content {
    padding: 93px 0 94px;
    line-height: 17px;
    text-align: center;
}

.statusbar {
    display: flex;
    flex: none;
    align-items: flex-end;
    justify-content: flex-end;
    height: 20px;
}

.statusbar::before {
    content: "";
    flex: 1;
    align-self: flex-start;
    height: 2px;
    margin-right: 6px;
    border-top: 1px solid #b5b3b0;
    background-color: #fff;
}

.corner {
    width: 12px;
    height: 12px;
    margin-bottom: 1px;
    clip-path: polygon(100% 0, 100% 100%, 0 100%);
}

.window > .statusbar {
    height: 25px;
    margin: 0 4px;
}

.window > .statusbar .corner {
    margin-bottom: 4px;
}

/* Inspector */
.right {
    display: flex;
    flex: none;
    flex-direction: column;
    width: 347px;
    padding-top: 2px;
}

.entry {
    height: 27px;
    padding: 0 5px 1px;
    border: 1px solid #6f6d6a;
    border-radius: 3px;
    background-color: #fff;
    color: #1a1a1a;
    font: inherit;
}

.search::placeholder {
    color: #777;
    font-style: italic;
    opacity: 1;
}

.inspector {
    display: grid;
    grid-template-columns: 1fr 15px;
    grid-template-rows: 171px 15px;
    gap: 3px;
    padding-top: 2px;
}

.tree {
    min-width: 0;
    border: 1px solid #9c9a96;
    background-color: #fff;
    color: #1a1a1a;
    list-style: none;
    overflow: hidden;
}

.tree li {
    display: flex;
    align-items: center;
    height: 23px;
    padding-bottom: 1px;
    white-space: nowrap;
}

.tree .l1 {
    padding-left: 18px;
}

.tree .l2 {
    padding-left: 36px;
}

.tree .l3 {
    padding-left: 54px;
}

.tree .l4 {
    padding-left: 72px;
}

.tree .l5 {
    padding-left: 90px;
}

.tree .current {
    background: linear-gradient(#7fa5d8, #668fc5);
    color: #fff;
}

.exp {
    width: 12px;
    height: 12px;
    margin: 0 6px 0 2px;
    flex: none;
}

.slot {
    width: 16px;
    height: 16px;
    margin-right: 8px;
}

.tree em {
    margin-left: 100px;
    color: #b5b5b5;
}

.heading {
    display: flex;
    align-items: center;
    gap: 4px;
    height: 20px;
}

.heading svg {
    width: 22px;
    height: 22px;
}

.heading h2 {
    min-width: 0;
    font-size: 13px;
    font-weight: normal;
    line-height: 20px;
    text-overflow: ellipsis;
    white-space: nowrap;
    overflow: hidden;
}

/* Notebook */
.tabs {
    display: flex;
    align-items: flex-end;
    height: 31px;
    margin-top: 8px;
}

.tabs button {
    display: flex;
    align-items: center;
    height: 28px;
    padding: 0 6px 0 5px;
    border: 1px solid #9c9a96;
    border-left: none;
    border-bottom: none;
    background: linear-gradient(#e0dfdd, #cbc9c6);
}

.tabs button:last-child {
    border-radius: 0 3px 0 0;
}

.tabs .active {
    height: 32px;
    margin-bottom: -1px;
    padding: 0 6px;
    border: 1px solid #9c9a96;
    border-top: 1px solid #4a6fa5;
    border-bottom: none;
    border-radius: 3px 3px 0 0;
    background: linear-gradient(#86abd9 0 3px, #fff 3px, #f2f1ef);
    z-index: 1;
}

.tabs svg {
    width: 20px;
    height: 20px;
}

.page {
    flex: 1;
    padding: 9px 8px 8px;
    border: 1px solid #9c9a96;
    border-radius: 0 3px 3px 3px;
    background-color: #f2f1ef;
}

.props {
    display: grid;
    grid-template-columns: 1fr 160px;
    align-items: center;
    align-content: start;
    height: 100%;
    padding: 1px 3px 1px 9px;
    border: 1px solid #9c9a96;
}

.actions {
    display: flex;
    justify-content: flex-end;
    gap: 8px;
    padding: 7px 1px 1px 0;
}

.actions button {
    display: flex;
    align-items: center;
    justify-content: center;
    width: 32px;
    height: 32px;
    border: 1px solid #908e8a;
    border-radius: 3px;
    background: linear-gradient(#fff, #f8f8f7 50%, #e9e8e6);
}

.actions svg {
    width: 24px;
    height: 24px;
}
```
